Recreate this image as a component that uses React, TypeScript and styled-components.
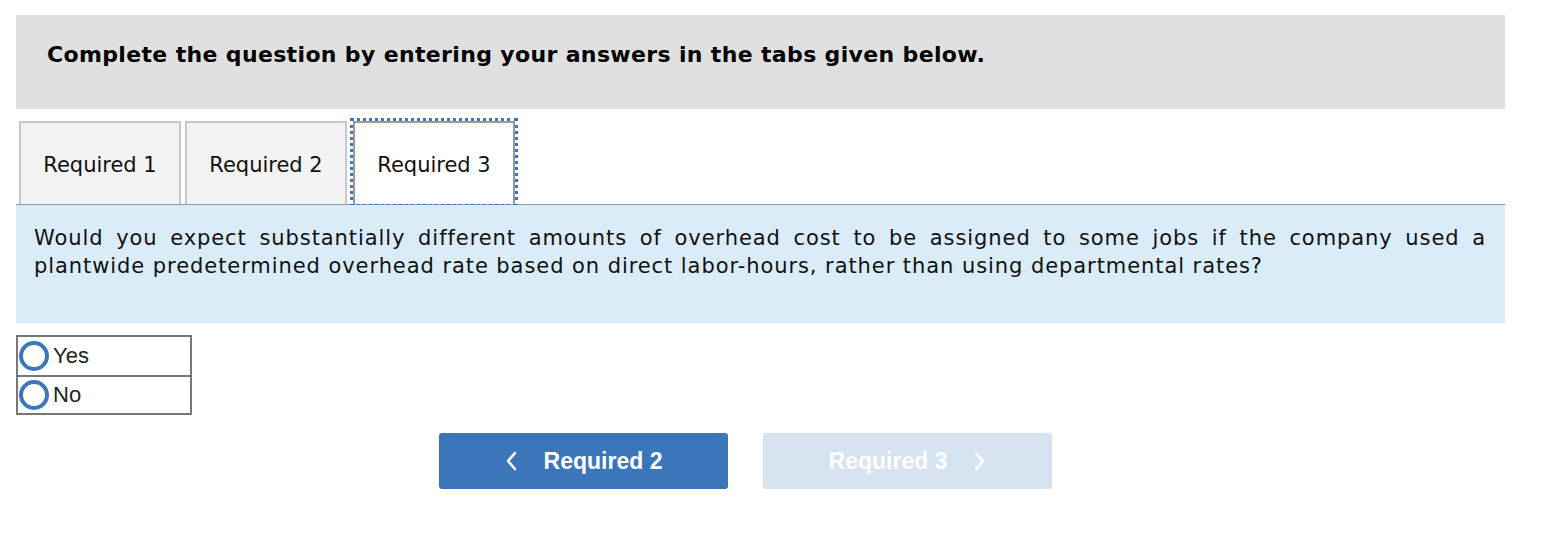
import React from "react";
import styled, { createGlobalStyle } from "styled-components";

const Global = createGlobalStyle`
  html, body { margin: 0; padding: 0; background: #fff; }
  body { font-family: "DejaVu Sans", Verdana, sans-serif; color: #000; }
`;

const Page = styled.div`
  padding: 15px 39px 0 16px;
  display: flex;
  flex-direction: column;
`;

const Banner = styled.div`
  background: #e0e0e0;
  height: 94px;
  box-sizing: border-box;
  padding: 27px 0 0 31px;
  font-weight: bold;
  font-size: 22px;
  letter-spacing: 0.35px;
`;

const TabBar = styled.div`
  display: flex;
  margin-top: 12px;
  padding-left: 3px;
  gap: 4px;
  border-bottom: 1px solid #999;
  height: 83px;
`;

const Tab = styled.div<{ $active?: boolean }>`
  box-sizing: border-box;
  width: 162px;
  height: 83px;
  display: flex;
  align-items: center;
  justify-content: center;
  font-size: 21px;
  color: #111;
  background: ${(p) => (p.$active ? "#fff" : "#f3f3f3")};
  border: 2px solid ${(p) => (p.$active ? "#999" : "#c8c8c8")};
  border-bottom: none;
  outline: ${(p) => (p.$active ? "3px dotted #3a78c5" : "none")};
  outline-offset: 0;
  margin-left: ${(p) => (p.$active ? "2px" : "0")};
  padding-top: 2px;
`;

const Question = styled.div`
  background: #dbecf9;
  height: 118px;
  box-sizing: border-box;
  padding: 19px 19px 0 18px;
  font-size: 21px;
  letter-spacing: 0.93px;
  line-height: 28px;
  text-align: justify;
  color: #111;
`;

const Choices = styled.div`
  margin-top: 12px;
  width: 176px;
  border: 2px solid #777;
  box-sizing: border-box;
  display: flex;
  flex-direction: column;
`;

const Choice = styled.label`
  height: 38px;
  box-sizing: border-box;
  display: flex;
  align-items: center;
  gap: 4px;
  padding-left: 1px;
  font-family: "Liberation Sans", Arial, sans-serif;
  font-size: 22px;
  color: #222;
  & + & { border-top: 2px solid #777; }
`;

const Ring = styled.span`
  flex-shrink: 0;
  width: 30px;
  height: 30px;
  box-sizing: border-box;
  border: 4px solid #3a77bb;
  border-radius: 50%;
`;

const Nav = styled.div`
  display: flex;
  gap: 35px;
  margin-top: 18px;
  padding-left: 423px;
`;

const NavButton = styled.button<{ $disabled?: boolean }>`
  width: 289px;
  height: 56px;
  border: none;
  border-radius: 3px;
  background: ${(p) => (p.$disabled ? "#d6e3f1" : "#3a76b9")};
  color: #fff;
  font-family: "Liberation Sans", Arial, sans-serif;
  font-weight: bold;
  font-size: 23px;
  display: flex;
  align-items: center;
  justify-content: center;
  gap: 27px;
  padding: 0;
`;

const Chevron = ({ dir }: { dir: "left" | "right" }) => (
  <svg width="12" height="20" viewBox="0 0 12 20" fill="none">
    <path
      d={dir === "left" ? "M10 2 L3 10 L10 18" : "M2 2 L9 10 L2 18"}
      stroke="#fff"
      strokeWidth="2.6"
      strokeLinecap="round"
      strokeLinejoin="round"
    />
  </svg>
);

export default function App() {
  return (
    <>
      <Global />
      <Page>
        <Banner>Complete the question by entering your answers in the tabs given below.</Banner>
        <TabBar>
          <Tab>Required 1</Tab>
          <Tab>Required 2</Tab>
          <Tab $active>Required 3</Tab>
        </TabBar>
        <Question>
          Would you expect substantially different amounts of overhead cost to be assigned to some jobs if the company used a plantwide predetermined overhead rate based on direct labor-hours, rather than using departmental rates?
        </Question>
        <Choices>
          <Choice><Ring />Yes</Choice>
          <Choice><Ring />No</Choice>
        </Choices>
        <Nav>
          <NavButton><Chevron dir="left" />Required 2</NavButton>
          <NavButton $disabled>Required 3<Chevron dir="right" /></NavButton>
        </Nav>
      </Page>
    </>
  );
}
